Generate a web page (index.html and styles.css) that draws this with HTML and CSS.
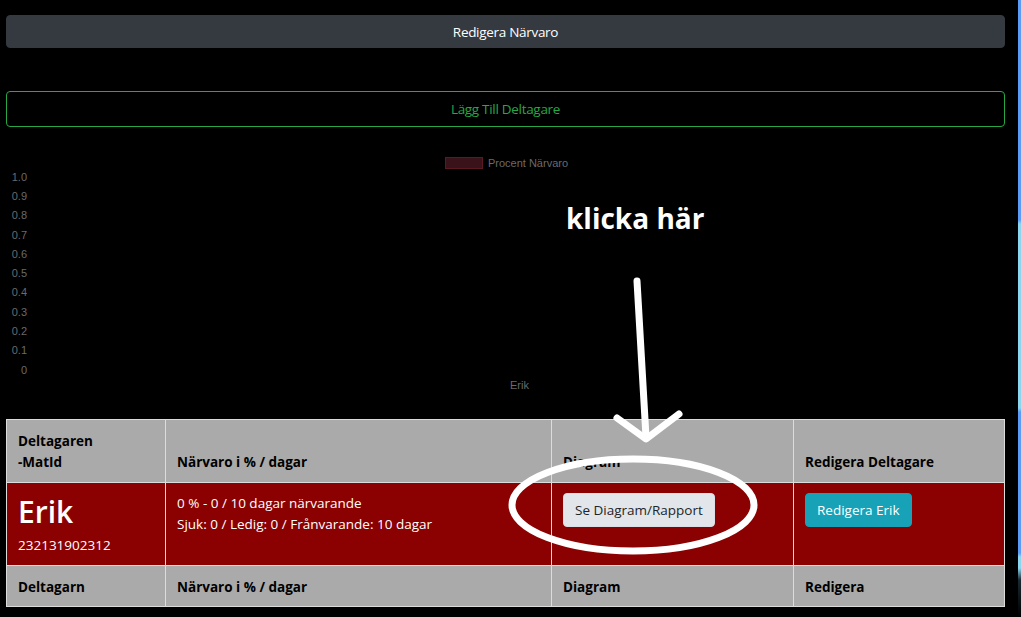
FILE: index.html
```html
<!DOCTYPE html>
<html lang="sv">
<head>
<meta charset="utf-8">
<title>Närvaro</title>
<link rel="stylesheet" href="styles.css">
</head>
<body>
<div class="page">
  <main class="main">
    <button class="btn btn-dark">Redigera Närvaro</button>
    <button class="btn btn-outline-success">Lägg Till Deltagare</button>

    <section class="chart">
      <div class="legend"><span class="legend-box"></span><span class="legend-text">Procent Närvaro</span></div>
      <div class="plot">
        <div class="y-axis">
          <span>1.0</span><span>0.9</span><span>0.8</span><span>0.7</span><span>0.6</span><span>0.5</span><span>0.4</span><span>0.3</span><span>0.2</span><span>0.1</span><span>0</span>
        </div>
        <div class="plot-area"></div>
      </div>
      <div class="x-axis"><span>Erik</span></div>
    </section>

    <table class="table">
      <thead>
        <tr>
          <th class="c1">Deltagaren<br>-MatId</th>
          <th class="c2">Närvaro i % / dagar</th>
          <th class="c3">Diagram</th>
          <th class="c4">Redigera Deltagare</th>
        </tr>
      </thead>
      <tbody>
        <tr>
          <td>
            <div class="name">Erik</div>
            <div class="id">232131902312</div>
          </td>
          <td>
            <div>0 % - 0 / 10 dagar närvarande</div>
            <div>Sjuk: 0 / Ledig: 0 / Frånvarande: 10 dagar</div>
          </td>
          <td><button class="btn-sm btn-light">Se Diagram/Rapport</button></td>
          <td><button class="btn-sm btn-info">Redigera Erik</button></td>
        </tr>
      </tbody>
      <tfoot>
        <tr>
          <th>Deltagarn</th>
          <th>Närvaro i % / dagar</th>
          <th>Diagram</th>
          <th>Redigera</th>
        </tr>
      </tfoot>
    </table>

    <div class="note">klicka här</div>
    <svg class="annot" width="1018" height="617" viewBox="0 0 1018 617">
      <g fill="none" stroke="#fff" stroke-width="7" stroke-linecap="round" stroke-linejoin="round">
        <path d="M637 281 L646 437"/>
        <path d="M617 418 L646 439 L679 414"/>
        <ellipse cx="633" cy="505" rx="121" ry="46"/>
      </g>
    </svg>
  </main>
  <div class="edge"></div>
</div>
</body>
</html>
```

FILE: styles.css
```css
html, body {
  margin: 0;
  padding: 0;
  background: #000;
  height: 100%;
  overflow: hidden;
}

.page {
  display: flex;
  height: 617px;
}

.main {
  position: relative;
  width: 1018px;
  display: flex;
  flex-direction: column;
  padding: 15px 13px 0 6px;
  box-sizing: border-box;
  font-family: "Open Sans", "Noto Sans", sans-serif;
}

.edge {
  width: 3px;
  background: linear-gradient(to bottom,
    #5b9cf6 0px, #5b9cf6 220px,
    #8bd6ee 224px, #8bd6ee 408px,
    #5b9cf6 412px, #5b9cf6 553px,
    #8bd6ee 557px, #8bd6ee 568px,
    #1a2a33 580px, #000 617px);
}

.btn {
  display: block;
  width: 100%;
  font-family: "Open Sans", sans-serif;
  font-size: 13.5px;
  letter-spacing: -0.3px;
  border-radius: 4px;
  cursor: pointer;
}

.btn-dark {
  height: 33px;
  background: #343a40;
  color: #fff;
  border: 1px solid #343a40;
}

.btn-outline-success {
  margin-top: 43px;
  height: 36px;
  background: transparent;
  color: #28a745;
  border: 1px solid #28a745;
}

.chart {
  display: flex;
  flex-direction: column;
  font-family: "Liberation Sans", Arial, sans-serif;
  font-size: 11px;
  color: #6a6a6a;
}

.legend {
  margin-top: 30px;
  height: 12px;
  display: flex;
  justify-content: center;
  align-items: center;
  gap: 5px;
  padding-left: 2px;
}

.legend-box {
  width: 36px;
  height: 10px;
  background: #3a1219;
  border: 1px solid #5a1a24;
}

.legend-text {
  line-height: 12px;
}

.plot {
  display: flex;
  margin-top: -2px;
}

.y-axis {
  width: 21px;
  display: grid;
  grid-template-rows: repeat(11, 19.3px);
  align-items: center;
  justify-items: end;
}

.plot-area {
  flex: 1;
}

.x-axis {
  height: 12px;
  line-height: 12px;
  padding-left: 28px;
  text-align: center;
}

.table {
  margin-top: 28px;
  width: 999px;
  border-collapse: collapse;
  font-size: 13.5px;
  line-height: 21px;
}

.table th, .table td {
  border: 1px solid #dcdcdc;
  padding: 11px 11px 9px;
  text-align: left;
}

.table thead th, .table tfoot th {
  background: #aaa;
  color: #000;
  font-weight: 700;
  vertical-align: bottom;
}

.table tfoot th {
  padding-bottom: 8px;
}

.table tbody td {
  background: #8b0000;
  color: #fff;
  vertical-align: top;
  padding-top: 10px;
  padding-bottom: 9px;
}

.c1 { width: 136px; }
.c2 { width: 363px; }
.c3 { width: 219px; }

.name {
  font-size: 30px;
  font-weight: 600;
  line-height: 38px;
  margin-bottom: 4px;
}

.btn-sm {
  height: 34px;
  padding: 0 11px;
  border-radius: 4px;
  font-family: "Open Sans", sans-serif;
  font-size: 13.5px;
  cursor: pointer;
}

.btn-light {
  background: #e2e6ea;
  border: 1px solid #dae0e5;
  color: #212529;
}

.btn-info {
  background: #17a2b8;
  border: 1px solid #17a2b8;
  color: #fff;
}

.note {
  position: absolute;
  left: 566px;
  top: 198px;
  font-size: 28px;
  font-weight: 700;
  color: #fff;
  line-height: 40px;
}

.annot {
  position: absolute;
  left: 0;
  top: 0;
  pointer-events: none;
}
```
